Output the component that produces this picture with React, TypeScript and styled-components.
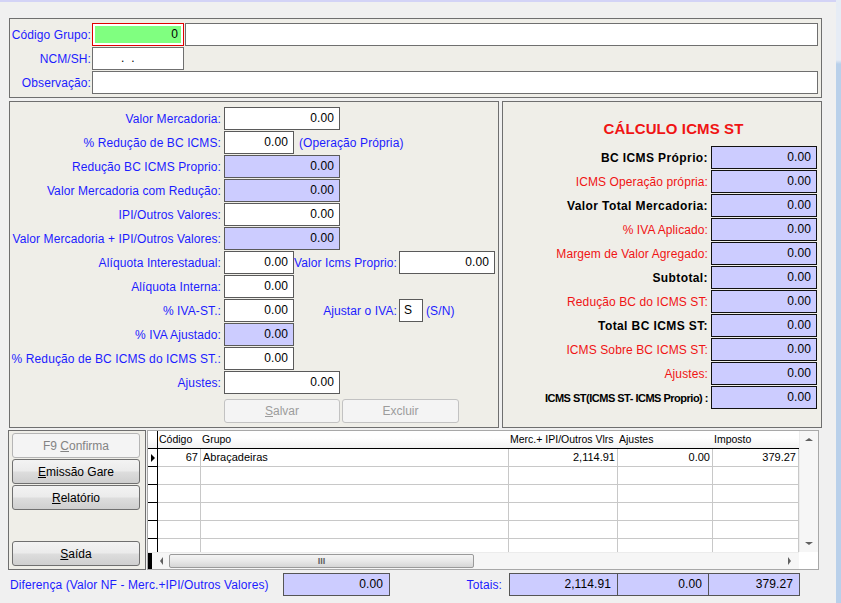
import React from 'react';
import styled, { createGlobalStyle, css } from 'styled-components';

const GlobalStyle = createGlobalStyle`
  html, body {
    margin: 0;
    padding: 0;
    background: #f0f0f0;
  }
  body {
    font-family: "Liberation Sans", Arial, sans-serif;
    font-size: 12px;
    letter-spacing: 0.1px;
    color: #000;
  }
  * {
    box-sizing: border-box;
  }
`;

const BLUE = '#1c1cff';
const RED = '#f01414';
const LAVENDER = '#ccccff';

type Tone = 'bold' | 'red' | 'small';

interface CalcRow {
  label: string;
  tone: Tone;
}

const calcRows: CalcRow[] = [
  { label: 'BC ICMS Próprio:', tone: 'bold' },
  { label: 'ICMS Operação própria:', tone: 'red' },
  { label: 'Valor Total Mercadoria:', tone: 'bold' },
  { label: '% IVA Aplicado:', tone: 'red' },
  { label: 'Margem de Valor Agregado:', tone: 'red' },
  { label: 'Subtotal:', tone: 'bold' },
  { label: 'Redução BC do ICMS ST:', tone: 'red' },
  { label: 'Total BC ICMS ST:', tone: 'bold' },
  { label: 'ICMS Sobre BC ICMS ST:', tone: 'red' },
  { label: 'Ajustes:', tone: 'red' },
  { label: 'ICMS ST(ICMS ST- ICMS Proprio) :', tone: 'small' },
];

const columns = [
  { title: 'Código', width: 43 },
  { title: 'Grupo', width: 308 },
  { title: 'Merc.+ IPI/Outros Vlrs', width: 109 },
  { title: 'Ajustes', width: 95 },
  { title: 'Imposto', width: 86 },
];

const gridRows = [
  ['67', 'Abraçadeiras', '2,114.91', '0.00', '379.27'],
  ['', '', '', '', ''],
  ['', '', '', '', ''],
  ['', '', '', '', ''],
  ['', '', '', '', ''],
  ['', '', '', '', ''],
];

const App: React.FC = () => {
  return (
    <Window>
      <GlobalStyle />
      <Main>
        <HeaderPanel>
          <HeadLabel>Código Grupo:</HeadLabel>
          <CodeInput>0</CodeInput>
          <TextBox />
          <HeadLabel>NCM/SH:</HeadLabel>
          <TextBox>&nbsp;&nbsp;&nbsp;&nbsp;&nbsp;&nbsp;&nbsp;.&nbsp;&nbsp;.</TextBox>
          <span />
          <HeadLabel>Observação:</HeadLabel>
          <TextBox $span />
        </HeaderPanel>

        <MiddleRow>
          <FormPanel>
            <FormRow>
              <FormLabel>Valor Mercadoria:</FormLabel>
              <Field $w={116}>0.00</Field>
            </FormRow>
            <FormRow>
              <FormLabel>% Redução de BC ICMS:</FormLabel>
              <Field $w={70}>0.00</Field>
              <Note>(Operação Própria)</Note>
            </FormRow>
            <FormRow>
              <FormLabel>Redução BC ICMS Proprio:</FormLabel>
              <Field $w={116} $ro>0.00</Field>
            </FormRow>
            <FormRow>
              <FormLabel>Valor Mercadoria com Redução:</FormLabel>
              <Field $w={116} $ro>0.00</Field>
            </FormRow>
            <FormRow>
              <FormLabel>IPI/Outros Valores:</FormLabel>
              <Field $w={116}>0.00</Field>
            </FormRow>
            <FormRow>
              <FormLabel>Valor Mercadoria + IPI/Outros Valores:</FormLabel>
              <Field $w={116} $ro>0.00</Field>
            </FormRow>
            <FormRow>
              <FormLabel>Alíquota Interestadual:</FormLabel>
              <Field $w={70}>0.00</Field>
              <SubLabel>Valor Icms Proprio:</SubLabel>
              <Field $w={96}>0.00</Field>
            </FormRow>
            <FormRow>
              <FormLabel>Alíquota Interna:</FormLabel>
              <Field $w={70}>0.00</Field>
            </FormRow>
            <FormRow>
              <FormLabel>% IVA-ST.:</FormLabel>
              <Field $w={70}>0.00</Field>
              <SubLabel>Ajustar o IVA:</SubLabel>
              <Field $w={24} $align="left">S</Field>
              <Note $gap={3}>(S/N)</Note>
            </FormRow>
            <FormRow>
              <FormLabel>% IVA Ajustado:</FormLabel>
              <Field $w={70} $ro>0.00</Field>
            </FormRow>
            <FormRow>
              <FormLabel>% Redução de BC ICMS do ICMS ST.:</FormLabel>
              <Field $w={70}>0.00</Field>
            </FormRow>
            <FormRow>
              <FormLabel>Ajustes:</FormLabel>
              <Field $w={116}>0.00</Field>
            </FormRow>
            <ActionRow>
              <FlatButton $w={116} disabled>
                <u>S</u>alvar
              </FlatButton>
              <FlatButton $w={117} disabled>
                Excluir
              </FlatButton>
            </ActionRow>
          </FormPanel>

          <CalcPanel>
            <CalcTitle>CÁLCULO ICMS ST</CalcTitle>
            <CalcGrid>
              {calcRows.map((row) => (
                <React.Fragment key={row.label}>
                  <CalcLabel $tone={row.tone}>{row.label}</CalcLabel>
                  <CalcField>0.00</CalcField>
                </React.Fragment>
              ))}
            </CalcGrid>
          </CalcPanel>
        </MiddleRow>

        <BottomRow>
          <ButtonPanel>
            <SideButton disabled>
              F9 <u>C</u>onfirma
            </SideButton>
            <SideButton>
              <u>E</u>missão Gare
            </SideButton>
            <SideButton>
              <u>R</u>elatório
            </SideButton>
            <SideButton $bottom>
              <u>S</u>aída
            </SideButton>
          </ButtonPanel>

          <DataGrid>
            <TableArea>
              <HeadRow>
                <IndicatorCell $head />
                {columns.map((c) => (
                  <HeadCell key={c.title} $w={c.width}>
                    {c.title}
                  </HeadCell>
                ))}
              </HeadRow>
              {gridRows.map((row, i) => (
                <DataRow key={i}>
                  <IndicatorCell>{i === 0 && <RowArrow />}</IndicatorCell>
                  {row.map((v, j) => (
                    <DataCell key={j} $w={columns[j].width} $right={j !== 1}>
                      {v}
                    </DataCell>
                  ))}
                </DataRow>
              ))}
            </TableArea>
            <VScroll>
              <ArrowUp />
              <ArrowDown />
            </VScroll>
            <HScroll>
              <HScrollLead />
              <ArrowLeft />
              <Thumb>
                <Grip>III</Grip>
              </Thumb>
              <ArrowRight />
            </HScroll>
            <Corner />
          </DataGrid>
        </BottomRow>

        <TotalsRow>
          <DiffLabel>Diferença (Valor NF - Merc.+IPI/Outros Valores)</DiffLabel>
          <TotalBox $w={107}>0.00</TotalBox>
          <TotalsLabel>Totais:</TotalsLabel>
          <TotalBox $w={109}>2,114.91</TotalBox>
          <TotalBox $w={92} $join>0.00</TotalBox>
          <TotalBox $w={92} $join>379.27</TotalBox>
        </TotalsRow>
      </Main>
      <SideStrip />
    </Window>
  );
};

export default App;

// Styled Components
const Window = styled.div`
  display: flex;
  width: 841px;
  height: 603px;
  overflow: hidden;
  background: #f0f0f0;
`;

const Main = styled.div`
  flex: 0 0 836px;
  border-top: 2px solid #d3d3f6;
  padding: 16px 14px 0 9px;
`;

const SideStrip = styled.div`
  flex: 1;
  background: linear-gradient(#e6ecf5 0, #e6ecf5 60px, #b9d0ea 64px, #b9d0ea 100%);
`;

const Panel = styled.div`
  background: #efeee8;
  border: 1px solid #6f6f6f;
`;

const HeaderPanel = styled(Panel)`
  height: 80px;
  display: grid;
  grid-template-columns: 81px 92px 1fr;
  grid-auto-rows: 23px;
  column-gap: 1px;
  row-gap: 1px;
  align-content: start;
  padding: 4px 3px 0 0;
`;

const HeadLabel = styled.label`
  display: flex;
  align-items: center;
  justify-content: flex-end;
  color: ${BLUE};
`;

const TextBox = styled.div<{ $span?: boolean }>`
  height: 23px;
  border: 1px solid #6f6f6f;
  background: #fff;
  line-height: 21px;
  padding: 0 4px;
  ${(p) =>
    p.$span &&
    css`
      grid-column: 2 / 4;
    `}
`;

const CodeInput = styled.div`
  height: 23px;
  border: 1px solid #e00000;
  background: #80ff80;
  box-shadow: inset 0 0 0 2px #fff;
  text-align: right;
  line-height: 21px;
  padding-right: 5px;
`;

const MiddleRow = styled.div`
  display: flex;
  gap: 3px;
  margin-top: 3px;
`;

const FormPanel = styled(Panel)`
  width: 490px;
  height: 327px;
  padding-top: 5px;
  display: flex;
  flex-direction: column;
  gap: 1px;
`;

const FormRow = styled.div`
  display: flex;
  align-items: center;
  height: 23px;
`;

const FormLabel = styled.label`
  flex: 0 0 214px;
  text-align: right;
  padding-right: 3px;
  color: ${BLUE};
  white-space: nowrap;
`;

const SubLabel = styled.label`
  flex: 0 0 105px;
  text-align: right;
  padding-right: 2px;
  color: ${BLUE};
  white-space: nowrap;
`;

const Note = styled.span<{ $gap?: number }>`
  margin-left: ${(p) => p.$gap ?? 5}px;
  color: ${BLUE};
  white-space: nowrap;
`;

const Field = styled.div<{ $w: number; $ro?: boolean; $align?: 'left' | 'right' }>`
  flex: 0 0 ${(p) => p.$w}px;
  height: 23px;
  border: 1px solid #5a5a5a;
  background: ${(p) => (p.$ro ? LAVENDER : '#fff')};
  line-height: 21px;
  text-align: ${(p) => p.$align || 'right'};
  padding: 0 5px 0 4px;
`;

const ActionRow = styled.div`
  display: flex;
  gap: 2px;
  margin-top: 4px;
  padding-left: 214px;
`;

const FlatButton = styled.button<{ $w: number }>`
  width: ${(p) => p.$w}px;
  height: 24px;
  border: 1px solid #c2c2c2;
  border-radius: 3px;
  background: #f4f4f4;
  color: #9c9c9c;
  font-family: inherit;
  font-size: 12px;
  padding: 0;
`;

const CalcPanel = styled(Panel)`
  width: 320px;
  height: 327px;
  padding: 16px 4px 0 0;
`;

const CalcTitle = styled.div`
  height: 22px;
  line-height: 22px;
  margin-bottom: 6px;
  padding-left: 27px;
  text-align: center;
  color: ${RED};
  font-size: 15px;
  font-weight: bold;
`;

const CalcGrid = styled.div`
  display: grid;
  grid-template-columns: 1fr 106px;
  grid-auto-rows: 23px;
  column-gap: 3px;
  row-gap: 1px;
`;

const CalcLabel = styled.label<{ $tone: Tone }>`
  display: flex;
  align-items: center;
  justify-content: flex-end;
  white-space: nowrap;
  ${(p) =>
    p.$tone === 'red'
      ? css`
          color: ${RED};
        `
      : p.$tone === 'bold'
      ? css`
          font-weight: bold;
          letter-spacing: 0.4px;
        `
      : css`
          font-weight: bold;
          font-size: 11px;
          letter-spacing: -0.5px;
        `}
`;

const CalcField = styled.div`
  border: 1px solid #111;
  background: ${LAVENDER};
  line-height: 21px;
  text-align: right;
  padding-right: 5px;
`;

const BottomRow = styled.div`
  display: flex;
  gap: 1px;
  margin-top: 2px;
  margin-left: -1px;
  height: 140px;
`;

const ButtonPanel = styled(Panel)`
  width: 138px;
  display: flex;
  flex-direction: column;
  gap: 1px;
  padding: 2px 5px 3px 3px;
`;

const SideButton = styled.button<{ $bottom?: boolean }>`
  height: 25px;
  border: 1px solid #707070;
  border-radius: 3px;
  background: linear-gradient(#f3f3f3, #ebebeb 48%, #dddddd 52%, #cfcfcf);
  font-family: inherit;
  font-size: 12px;
  color: #000;
  padding: 0;
  ${(p) =>
    p.$bottom &&
    css`
      margin-top: auto;
    `}
  &:disabled {
    border-color: #b5b5b5;
    background: #f4f4f4;
    color: #838383;
  }
`;

const DataGrid = styled.div`
  width: 672px;
  border: 1px solid #a8a8a8;
  background: #fff;
  display: grid;
  grid-template-columns: 651px 1fr;
  grid-template-rows: 121px 17px;
`;

const TableArea = styled.div`
  overflow: hidden;
  font-size: 11px;
  letter-spacing: 0;
`;

const HeadRow = styled.div`
  display: flex;
  height: 18px;
  border-bottom: 1px solid #000;
  background: linear-gradient(#ffffff 40%, #f1f1f1);
`;

const HeadCell = styled.div<{ $w: number }>`
  flex: 0 0 ${(p) => p.$w}px;
  font-size: 10.5px;
  line-height: 17px;
  padding-left: 1px;
  white-space: nowrap;
  overflow: hidden;
`;

const DataRow = styled.div`
  display: flex;
  height: 18px;
`;

const IndicatorCell = styled.div<{ $head?: boolean }>`
  flex: 0 0 10px;
  border-right: 1px solid #000;
  border-bottom: ${(p) => (p.$head ? 'none' : '1px solid #000')};
  display: flex;
  align-items: center;
  padding-left: 3px;
`;

const RowArrow = styled.span`
  width: 0;
  height: 0;
  border-left: 4px solid #000;
  border-top: 4px solid transparent;
  border-bottom: 4px solid transparent;
`;

const DataCell = styled.div<{ $w: number; $right?: boolean }>`
  flex: 0 0 ${(p) => p.$w}px;
  border-right: 1px solid #c8c8c8;
  border-bottom: 1px solid #c8c8c8;
  line-height: 17px;
  text-align: ${(p) => (p.$right ? 'right' : 'left')};
  padding: 0 2px;
  white-space: nowrap;
  overflow: hidden;
`;

const VScroll = styled.div`
  background: #f6f6f6;
  border-left: 1px solid #ececec;
  display: flex;
  flex-direction: column;
  justify-content: space-between;
  align-items: center;
  padding: 7px 0 7px;
`;

const ArrowUp = styled.span`
  width: 0;
  height: 0;
  border-bottom: 3px solid #606060;
  border-left: 4px solid transparent;
  border-right: 4px solid transparent;
`;

const ArrowDown = styled.span`
  width: 0;
  height: 0;
  border-top: 3px solid #606060;
  border-left: 4px solid transparent;
  border-right: 4px solid transparent;
`;

const HScroll = styled.div`
  display: flex;
  align-items: center;
  background: #f6f6f6;
  border-top: 1px solid #ececec;
`;

const HScrollLead = styled.span`
  align-self: stretch;
  flex: 0 0 4px;
  background: #000;
`;

const ArrowLeft = styled.span`
  width: 0;
  height: 0;
  margin: 0 6px 0 8px;
  border-right: 3px solid #606060;
  border-top: 4px solid transparent;
  border-bottom: 4px solid transparent;
`;

const ArrowRight = styled.span`
  width: 0;
  height: 0;
  margin-left: auto;
  margin-right: 8px;
  border-left: 3px solid #606060;
  border-top: 4px solid transparent;
  border-bottom: 4px solid transparent;
`;

const Thumb = styled.div`
  width: 305px;
  height: 14px;
  border: 1px solid #9a9a9a;
  border-radius: 2px;
  background: linear-gradient(#f4f4f4, #e8e8e8 50%, #d6d6d6);
  display: flex;
  align-items: center;
  justify-content: center;
`;

const Grip = styled.span`
  font-size: 9px;
  font-weight: bold;
  letter-spacing: 0;
  color: #606060;
  line-height: 1;
`;

const Corner = styled.div`
  background: #fff;
`;

const TotalsRow = styled.div`
  display: flex;
  align-items: center;
  height: 23px;
  margin-top: 3px;
  padding-left: 1px;
`;

const DiffLabel = styled.span`
  flex: 0 0 273px;
  color: ${BLUE};
  white-space: nowrap;
`;

const TotalsLabel = styled.span`
  flex: 0 0 119px;
  text-align: right;
  padding-right: 7px;
  color: ${BLUE};
`;

const TotalBox = styled.div<{ $w: number; $join?: boolean }>`
  flex: 0 0 ${(p) => p.$w}px;
  height: 23px;
  border: 1px solid #555;
  background: ${LAVENDER};
  line-height: 21px;
  text-align: right;
  padding-right: 6px;
  margin-left: ${(p) => (p.$join ? -1 : 0)}px;
`;
